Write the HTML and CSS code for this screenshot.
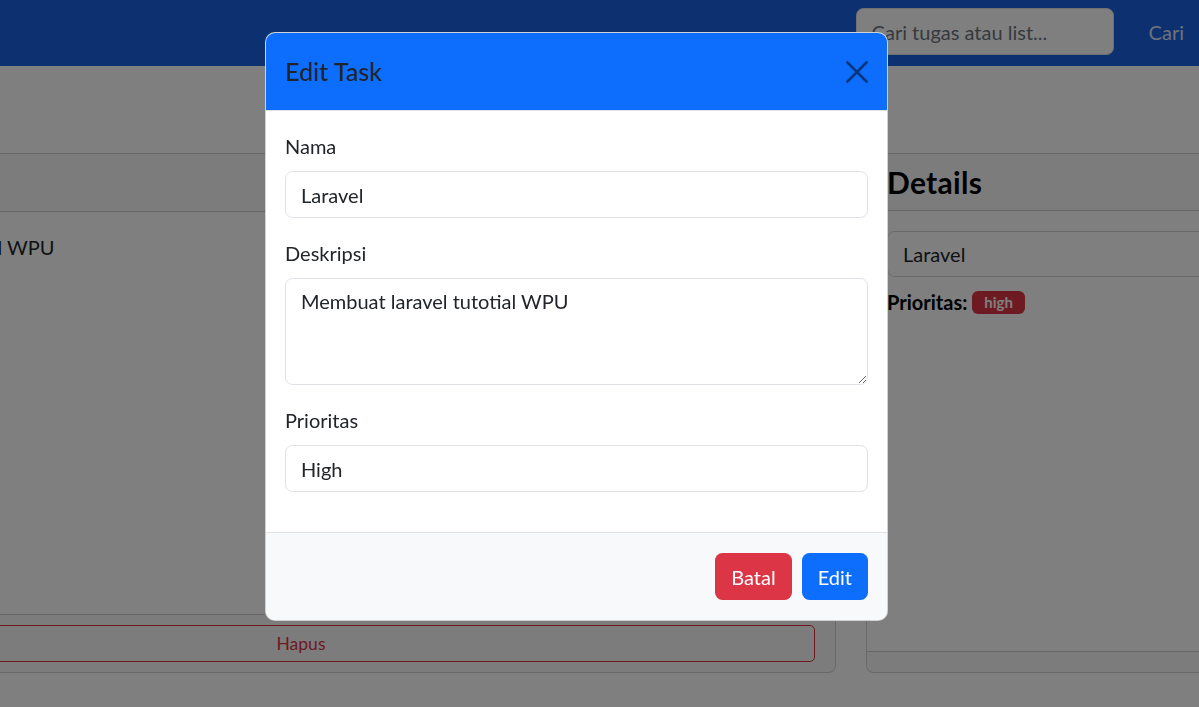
FILE: index.html
```html
<!DOCTYPE html>
<html lang="id">
<head>
<meta charset="utf-8">
<title>Edit Task</title>
<link rel="stylesheet" href="styles.css">
</head>
<body>
<nav class="navbar">
  <form class="search">
    <input class="search-input" type="text" placeholder="Cari tugas atau list...">
    <button class="search-btn" type="button">Cari</button>
  </form>
</nav>
<main class="page">
  <div class="row">
    <section class="card card-list">
      <div class="card-header"><h4 class="list-title">Laravel</h4></div>
      <div class="card-body"><p class="desc">Membuat laravel tutotial WPU</p></div>
      <div class="card-footer"><button class="btn-hapus" type="button">Hapus</button></div>
    </section>
    <section class="card card-detail">
      <div class="card-header"><h4 class="details-title">Details</h4></div>
      <div class="card-body">
        <div class="list-item">Laravel</div>
        <p class="prio"><strong>Prioritas:</strong> <span class="badge">high</span></p>
      </div>
      <div class="card-footer"></div>
    </section>
  </div>
</main>
<div class="backdrop"></div>
<div class="modal">
  <div class="modal-header">
    <h1 class="modal-title">Edit Task</h1>
    <button class="btn-close" type="button" aria-label="Close">
      <svg viewBox="0 0 16 16" width="22" height="22"><path d="M.293.293a1 1 0 0 1 1.414 0L8 6.586 14.293.293a1 1 0 1 1 1.414 1.414L9.414 8l6.293 6.293a1 1 0 0 1-1.414 1.414L8 9.414l-6.293 6.293a1 1 0 0 1-1.414-1.414L6.586 8 .293 1.707a1 1 0 0 1 0-1.414z"/></svg>
    </button>
  </div>
  <div class="modal-body">
    <div class="field">
      <label class="label" for="nama">Nama</label>
      <input class="control" id="nama" type="text" value="Laravel">
    </div>
    <div class="field">
      <label class="label" for="desk">Deskripsi</label>
      <textarea class="control area" id="desk" rows="3">Membuat laravel tutotial WPU</textarea>
    </div>
    <div class="field">
      <label class="label" for="prio">Prioritas</label>
      <input class="control" id="prio" type="text" value="High">
    </div>
  </div>
  <div class="modal-footer">
    <button class="btn btn-danger" type="button">Batal</button>
    <button class="btn btn-primary" type="button">Edit</button>
  </div>
</div>
</body>
</html>
```

FILE: styles.css
```css
* { box-sizing: border-box; }

html, body {
  margin: 0;
  height: 100%;
}

body {
  font-family: Lato, "Liberation Sans", sans-serif;
  font-size: 20px;
  line-height: 1.5;
  color: #212529;
  background: #fff;
  overflow: hidden;
}

/* navbar */
.navbar {
  height: 66px;
  background: #1a60e0;
  display: flex;
  justify-content: flex-end;
  align-items: flex-start;
  padding-top: 8px;
}

.search {
  display: flex;
  align-items: center;
}

.search-input {
  width: 258px;
  height: 47px;
  padding: 7px 15px;
  border: 1px solid #dee2e6;
  border-radius: 7.5px;
  font: inherit;
  color: #212529;
  background: #fff;
}

.search-input::placeholder { color: #6c757d; }

.search-btn {
  margin-left: 20px;
  height: 47px;
  padding: 7px 15px;
  border: 0;
  background: transparent;
  font: inherit;
  color: rgba(255, 255, 255, .85);
}

/* page */
.page { padding-top: 87px; }

.row {
  display: flex;
  gap: 30px;
  height: 520px;
}

.card {
  flex: none;
  display: flex;
  flex-direction: column;
  border: 1px solid rgba(0, 0, 0, .175);
  border-radius: 7.5px;
  background: #fff;
  overflow: hidden;
}

.card-list {
  width: 1070px;
  margin-left: -234px;
}

.card-detail { width: 420px; }

.card-header {
  padding: 10px 20px;
  background: rgba(33, 37, 41, .03);
  border-bottom: 1px solid rgba(0, 0, 0, .175);
}

.list-title {
  margin: 0;
  font-size: 30px;
  line-height: 37px;
  font-weight: 700;
  text-align: right;
}

.details-title {
  margin: 0;
  font-size: 30px;
  line-height: 36px;
  font-weight: 700;
  color: #000;
  letter-spacing: .3px;
}

.card-body {
  flex: 1;
  padding: 20px;
}

.desc { margin: 0; }

.card-footer {
  padding: 10px 20px;
  min-height: 21px;
  background: rgba(33, 37, 41, .03);
  border-top: 1px solid rgba(0, 0, 0, .175);
}

.btn-hapus {
  display: block;
  width: 100%;
  height: 37px;
  padding: 4px 10px;
  border: 1px solid #dc3545;
  border-radius: 5px;
  background: transparent;
  color: #dc3545;
  font: inherit;
  font-size: 17.5px;
  line-height: 26px;
}

.list-item {
  padding: 7px 15px;
  border: 1px solid rgba(0, 0, 0, .175);
  border-radius: 7.5px;
}

.prio {
  margin: 10px 0 0;
  display: flex;
  align-items: center;
  gap: 5px;
  color: #000;
}

.badge {
  display: inline-block;
  padding: 4px 12px;
  border-radius: 6px;
  background: #dc3545;
  color: #fff;
  font-size: 15px;
  font-weight: 700;
  line-height: 15px;
}

/* backdrop + modal */
.backdrop {
  position: fixed;
  inset: 0;
  background: rgba(0, 0, 0, .5);
}

.modal {
  position: fixed;
  left: 265px;
  top: 32px;
  width: 623px;
  background: #fff;
  border: 1px solid rgba(0, 0, 0, .175);
  border-radius: 10px;
  overflow: hidden;
}

.modal-header {
  display: flex;
  align-items: center;
  justify-content: space-between;
  padding: 20px 19px;
  background: #0d6efd;
  border-bottom: 1px solid #dee2e6;
}

.modal-title {
  margin: 0;
  font-size: 25px;
  line-height: 37px;
  font-weight: 500;
  color: #212529;
}

.btn-close {
  display: flex;
  padding: 0;
  border: 0;
  background: transparent;
  opacity: .5;
}

.btn-close svg { fill: #000; display: block; }

.modal-body { padding: 20px 19px; }

.field { margin-bottom: 20px; }

.label {
  display: block;
  margin-bottom: 10px;
  line-height: 30px;
}

.control {
  display: block;
  width: 100%;
  height: 47px;
  padding: 7px 15px;
  border: 1px solid #dee2e6;
  border-radius: 7.5px;
  font: inherit;
  line-height: 30px;
  color: #212529;
  background: #fff;
}

.area {
  height: 107px;
  resize: vertical;
}

.modal-footer {
  display: flex;
  justify-content: flex-end;
  gap: 10px;
  padding: 20px 19px;
  background: #f8f9fa;
  border-top: 1px solid #dee2e6;
}

.btn {
  height: 47px;
  padding: 7px 15px;
  border: 1px solid transparent;
  border-radius: 7.5px;
  font: inherit;
  line-height: 30px;
  color: #fff;
}

.btn-danger { background: #dc3545; }
.btn-primary { background: #0d6efd; }
```
